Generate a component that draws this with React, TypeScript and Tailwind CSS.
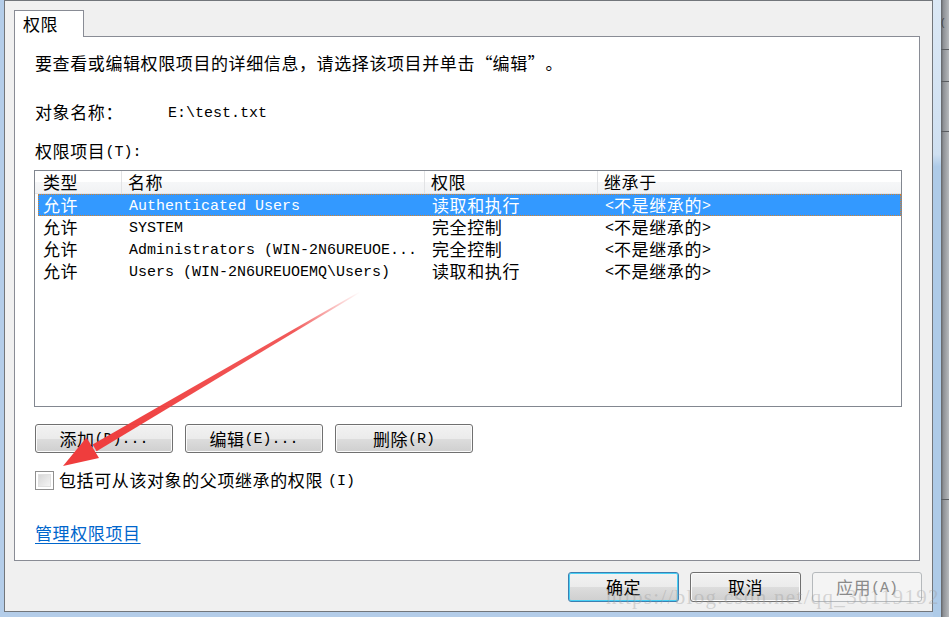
import React from 'react';

const CJK = "font-['Noto_Sans_CJK_SC','Noto_Sans_CJK_JP',sans-serif]";

// splits a label into ASCII runs (narrow mono) and CJK runs
function Txt({ s }: { s: string }) {
  const parts = s.split(/([ -~]+|[“”])/).filter(Boolean);
  return (
    <>
      {parts.map((p, i) => {
        if (/^[ -~]+$/.test(p)) {
          return (
            <span key={i} className="relative top-[2px] font-['Liberation_Mono',monospace] text-[15px] whitespace-pre">
              {p}
            </span>
          );
        }
        if (p === '“' || p === '”') {
          return (
            <span key={i} className={`inline-block w-[17.6px] text-[17px] ${p === '“' ? 'text-right' : 'text-left'}`}>
              {p}
            </span>
          );
        }
        return (
          <span key={i} className="text-[17px] tracking-[0.6px]">
            {p}
          </span>
        );
      })}
    </>
  );
}

const ROWS = [
  { type: '允许', name: 'Authenticated Users', perm: '读取和执行', from: '<不是继承的>' },
  { type: '允许', name: 'SYSTEM', perm: '完全控制', from: '<不是继承的>' },
  { type: '允许', name: 'Administrators (WIN-2N6UREUOE...', perm: '完全控制', from: '<不是继承的>' },
  { type: '允许', name: 'Users (WIN-2N6UREUOEMQ\\Users)', perm: '读取和执行', from: '<不是继承的>' },
];

function WinButton({ label, w = 'w-[138px]', h = 'h-[29px]', kind = 'normal' }: { label: string; w?: string; h?: string; kind?: 'normal' | 'default' | 'disabled' }) {
  if (kind === 'disabled') {
    return (
      <div className={`${w} ${h} rounded-[3px] border border-[#b5b9bc] bg-[#f4f4f4] text-[#8a8a8a] flex items-center justify-center`}>
        <Txt s={label} />
      </div>
    );
  }
  return (
    <div
      className={`${w} ${h} rounded-[3px] border ${
        kind === 'default' ? 'border-[#3c7fb1] shadow-[inset_0_0_0_1px_#48d0f5]' : 'border-[#707070] shadow-[inset_0_0_0_1px_#fbfbfb]'
      } bg-[linear-gradient(#f2f2f2,#ebebeb_50%,#dddddd_50%,#cfcfcf)] text-black flex items-center justify-center`}
    >
      <Txt s={label} />
    </div>
  );
}

export default function App() {
  return (
    <div className={`relative w-[949px] h-[617px] overflow-hidden flex bg-[#b4cde9] ${CJK} text-black`}>
      {/* left window edge */}
      <div className="w-[4px] shrink-0" />

      {/* dialog */}
      <div className="w-[929px] h-[612px] shrink-0 border border-[#72767b] bg-[#f0f0f0] flex flex-col pl-[9px] pt-[9px]">
        {/* tab */}
        <div className="relative z-10 -mb-px w-[70px] h-[27px] border border-b-0 border-[#898c95] bg-white pl-[8px] flex items-center">
          <Txt s="权限" />
        </div>

        {/* tab page */}
        <div className="w-[906px] h-[525px] border border-[#898c95] bg-white pl-[19px] pt-[15px] flex flex-col">
          <div className="h-[22px] pl-px flex items-center">
            <Txt s="要查看或编辑权限项目的详细信息，请选择该项目并单击“编辑”。" />
          </div>
          <div className="mt-[27px] h-[22px] pl-px flex items-center">
            <div className="w-[133px]">
              <Txt s="对象名称：" />
            </div>
            <Txt s="E:\test.txt" />
          </div>
          <div className="mt-[17px] h-[22px] pl-px flex items-center">
            <Txt s="权限项目(T):" />
          </div>

          {/* list view */}
          <div className="mt-[8px] w-[868px] h-[237px] border border-[#828790] bg-white flex flex-col">
            <div className="h-[23px] flex border-b border-[#e3e5e8] bg-[linear-gradient(#ffffff,#ffffff_50%,#f6f7f8_50%,#f1f2f4)]">
              <div className="w-[87px] pl-[8px] border-r border-[#e2e3e5] flex items-center">
                <Txt s="类型" />
              </div>
              <div className="w-[303px] pl-[6px] border-r border-[#e2e3e5] flex items-center">
                <Txt s="名称" />
              </div>
              <div className="w-[173px] pl-[6px] border-r border-[#e2e3e5] flex items-center">
                <Txt s="权限" />
              </div>
              <div className="flex-1 pl-[6px] flex items-center">
                <Txt s="继承于" />
              </div>
            </div>
            <div className="pl-[3px] flex flex-col">
              {ROWS.map((r, i) => (
                <div
                  key={i}
                  className={`w-[863px] h-[22px] flex border ${
                    i === 0 ? 'bg-[#3399ff] text-white border-dotted border-[#d8822b]' : 'border-transparent'
                  }`}
                >
                  <div className="w-[85px] pl-[4px] flex items-center">
                    <Txt s={r.type} />
                  </div>
                  <div className="w-[303px] pl-[5px] flex items-center">
                    <Txt s={r.name} />
                  </div>
                  <div className="w-[173px] pl-[5px] flex items-center">
                    <Txt s={r.perm} />
                  </div>
                  <div className="flex-1 pl-[5px] flex items-center">
                    <Txt s={r.from} />
                  </div>
                </div>
              ))}
            </div>
          </div>

          {/* add / edit / remove */}
          <div className="mt-[17px] pl-px flex gap-[12px]">
            <WinButton label="添加(D)..." />
            <WinButton label="编辑(E)..." />
            <WinButton label="删除(R)" />
          </div>

          <div className="mt-[16px] h-[22px] pl-px flex items-center gap-[5px]">
            <div className="w-[19px] h-[19px] border border-[#8f8f8f] bg-white p-[2px]">
              <div className="w-full h-full bg-[linear-gradient(135deg,#d8d8d8,#f4f4f4)] border border-[#e0e0e0]" />
            </div>
            <Txt s="包括可从该对象的父项继承的权限(I)" />
          </div>

          <div className="mt-[31px] h-[22px] pl-px flex items-center">
            <span className="text-[#0066cc] underline underline-offset-[3px] decoration-[#0066cc]">
              <Txt s="管理权限项目" />
            </span>
          </div>
        </div>

        {/* dialog buttons */}
        <div className="mt-[11px] pr-[10px] flex justify-end gap-[11px]">
          <WinButton label="确定" w="w-[111px]" h="h-[30px]" kind="default" />
          <WinButton label="取消" w="w-[111px]" h="h-[30px]" />
          <WinButton label="应用(A)" w="w-[110px]" h="h-[30px]" kind="disabled" />
        </div>
      </div>

      {/* neighbouring window edges */}
      <div className="w-[8px] shrink-0 bg-[linear-gradient(#dbe8f5,#cfe0f1_25%,#aecbe8_27%,#aecbe8)]" />
      <div className="w-[8px] shrink-0 flex flex-col bg-[linear-gradient(90deg,#5f6266,#8e9196_30%,#b7babd)]">
        <div className="h-[16px]" />
        <div className="h-[34px] border-b border-[#5a5d61] text-[10px] leading-[14px] text-[#444] font-['Liberation_Sans',sans-serif] overflow-hidden">(</div>
        <div className="h-[32px] border-b border-[#5a5d61]" />
        <div className="h-[50px] border-b border-[#5a5d61]" />
        <div className="h-[368px] border-b border-[#5a5d61]" />
      </div>

      {/* watermark */}
      <div className="absolute left-[606px] top-[582px] font-['Liberation_Serif',serif] text-[21px] tracking-[1.3px] text-[#a0a0a0]/40 whitespace-pre pointer-events-none">
        https://blog.csdn.net/qq_36119192
      </div>

      {/* annotation arrow */}
      <svg className="absolute left-0 top-0 pointer-events-none" width="949" height="617" viewBox="0 0 949 617">
        <defs>
          <linearGradient id="shaft" gradientUnits="userSpaceOnUse" x1="360" y1="292" x2="96" y2="446">
            <stop offset="0" stopColor="#f04848" stopOpacity="0" />
            <stop offset="0.25" stopColor="#f04848" stopOpacity="0.9" />
            <stop offset="1" stopColor="#ef3d3d" stopOpacity="1" />
          </linearGradient>
        </defs>
        <polygon points="360.3,292.4 96.6,451.2 92.6,444.4 359.7,291.6" fill="url(#shaft)" />
        <polygon points="63,466 99,458 86.5,437.5" fill="#ef3d3d" />
      </svg>
    </div>
  );
}
